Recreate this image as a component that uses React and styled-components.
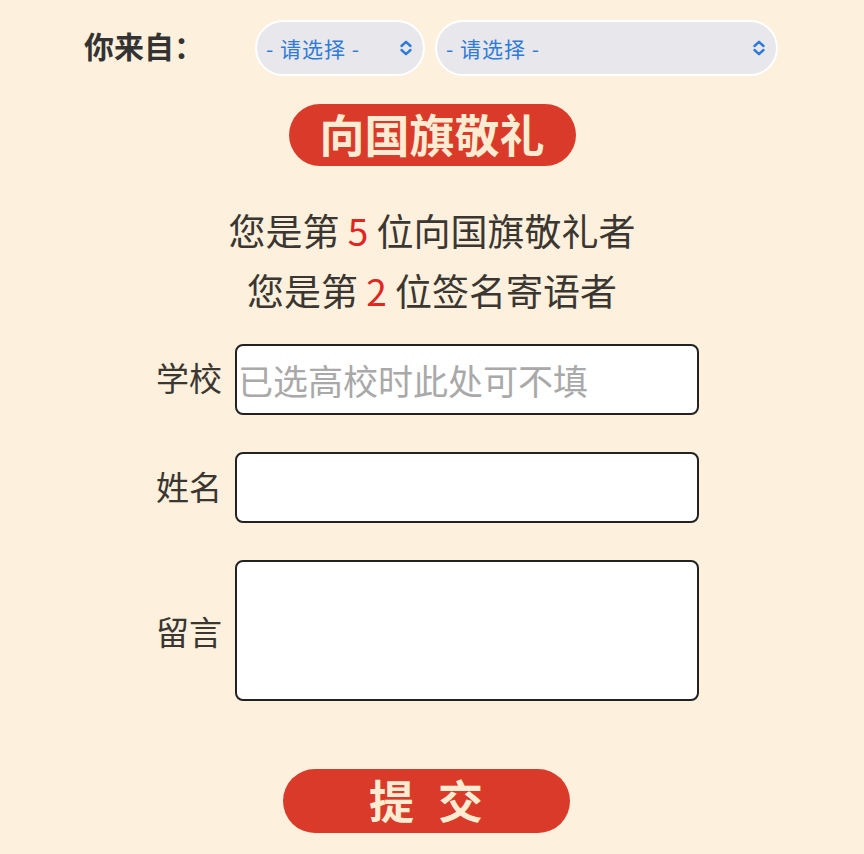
import styled, { createGlobalStyle } from 'styled-components';

const GlobalStyle = createGlobalStyle`
  html, body {
    margin: 0;
    padding: 0;
    background: #fdf0dc;
  }
  body {
    font-family: 'Noto Sans CJK SC', 'Noto Sans', sans-serif;
    color: #3a3632;
  }
`;

const Page = styled.div`
  width: 864px;
  min-height: 854px;
  padding-top: 20px;
  box-sizing: border-box;
  display: flex;
  flex-direction: column;
  align-items: center;
`;

const FromRow = styled.div`
  align-self: stretch;
  display: flex;
  align-items: center;
  padding-left: 84px;
  height: 56px;
`;

const FromLabel = styled.div`
  width: 171px;
  font-size: 30px;
  font-weight: 700;
  color: #333;
  margin-top: -6px;
`;

const SelectBox = styled.div`
  position: relative;
  width: ${(p) => p.$width}px;
  height: 56px;
  margin-right: 10px;
`;

const Select = styled.select`
  appearance: none;
  -webkit-appearance: none;
  width: 100%;
  height: 100%;
  box-sizing: border-box;
  border: 2px solid #fff;
  border-radius: 28px;
  background: #e8e7ec;
  color: #2f7bd8;
  font-family: 'Noto Sans CJK SC', sans-serif;
  font-size: 21px;
  letter-spacing: 1px;
  padding: 0 0 0 9px;
  outline: none;
`;

const Chevron = styled.svg`
  position: absolute;
  right: 12px;
  top: 50%;
  transform: translateY(-50%);
  pointer-events: none;
`;

const RedButton = styled.button`
  width: ${(p) => p.$width}px;
  height: ${(p) => p.$height}px;
  margin-top: ${(p) => p.$top}px;
  margin-left: ${(p) => p.$shift || 0}px;
  border: none;
  border-radius: 32px;
  background: #d93a2a;
  color: #fdecd2;
  font-family: 'Noto Sans CJK SC', sans-serif;
  font-size: 45px;
  font-weight: 700;
  letter-spacing: ${(p) => p.$spacing || 0}px;
  text-indent: ${(p) => p.$spacing || 0}px;
  line-height: 1;
  display: flex;
  align-items: center;
  justify-content: center;
  padding: 0 0 4px;
  cursor: pointer;
`;

const Stats = styled.div`
  margin-top: 34px;
  display: flex;
  flex-direction: column;
  align-items: center;
`;

const StatLine = styled.div`
  font-size: 37px;
  line-height: 60px;
  color: #3a3632;
`;

const Count = styled.span`
  color: #e0261f;
`;

const Form = styled.div`
  margin-top: 24px;
  align-self: stretch;
  display: flex;
  flex-direction: column;
  gap: 37px;
`;

const FormRow = styled.div`
  display: flex;
  align-items: center;
  padding-left: 148px;
`;

const FieldLabel = styled.label`
  width: 74px;
  text-align: right;
  font-size: 33px;
  color: #3a3632;
  margin-right: 13px;
  margin-top: ${(p) => p.$shift || 0}px;
`;

const TextInput = styled.input`
  width: 464px;
  height: 71px;
  box-sizing: border-box;
  border: 2px solid #222;
  border-radius: 8px;
  background: #fff;
  font-family: 'Noto Sans CJK SC', sans-serif;
  font-size: 35px;
  padding: 0 1px;
  outline: none;
  &::placeholder {
    color: #a9a9a9;
  }
`;

const TextArea = styled.textarea`
  width: 464px;
  height: 141px;
  box-sizing: border-box;
  border: 2px solid #222;
  border-radius: 8px;
  background: #fff;
  font-family: 'Noto Sans CJK SC', sans-serif;
  font-size: 28px;
  resize: none;
  outline: none;
`;

function UpDown() {
  return (
    <Chevron width="14" height="18" viewBox="0 0 14 18" fill="none" stroke="#2f7bd8" strokeWidth="2.4" strokeLinecap="round" strokeLinejoin="round">
      <path d="M2.5 7 L7 2.8 L11.5 7" />
      <path d="M2.5 11 L7 15.2 L11.5 11" />
    </Chevron>
  );
}

export default function App() {
  return (
    <>
      <GlobalStyle />
      <Page>
        <FromRow>
          <FromLabel>你来自：</FromLabel>
          <SelectBox $width={170}>
            <Select defaultValue="">
              <option value="">- 请选择 -</option>
            </Select>
            <UpDown />
          </SelectBox>
          <SelectBox $width={343}>
            <Select defaultValue="">
              <option value="">- 请选择 -</option>
            </Select>
            <UpDown />
          </SelectBox>
        </FromRow>

        <RedButton $width={287} $height={62} $top={28}>向国旗敬礼</RedButton>

        <Stats>
          <StatLine>您是第 <Count>5</Count> 位向国旗敬礼者</StatLine>
          <StatLine>您是第 <Count>2</Count> 位签名寄语者</StatLine>
        </Stats>

        <Form>
          <FormRow>
            <FieldLabel $shift={-5}>学校</FieldLabel>
            <TextInput placeholder="已选高校时此处可不填" />
          </FormRow>
          <FormRow>
            <FieldLabel $shift={-3}>姓名</FieldLabel>
            <TextInput />
          </FormRow>
          <FormRow>
            <FieldLabel>留言</FieldLabel>
            <TextArea />
          </FormRow>
        </Form>

        <RedButton $width={287} $height={64} $top={68} $shift={-12} $spacing={24}>提交</RedButton>
      </Page>
    </>
  );
}
